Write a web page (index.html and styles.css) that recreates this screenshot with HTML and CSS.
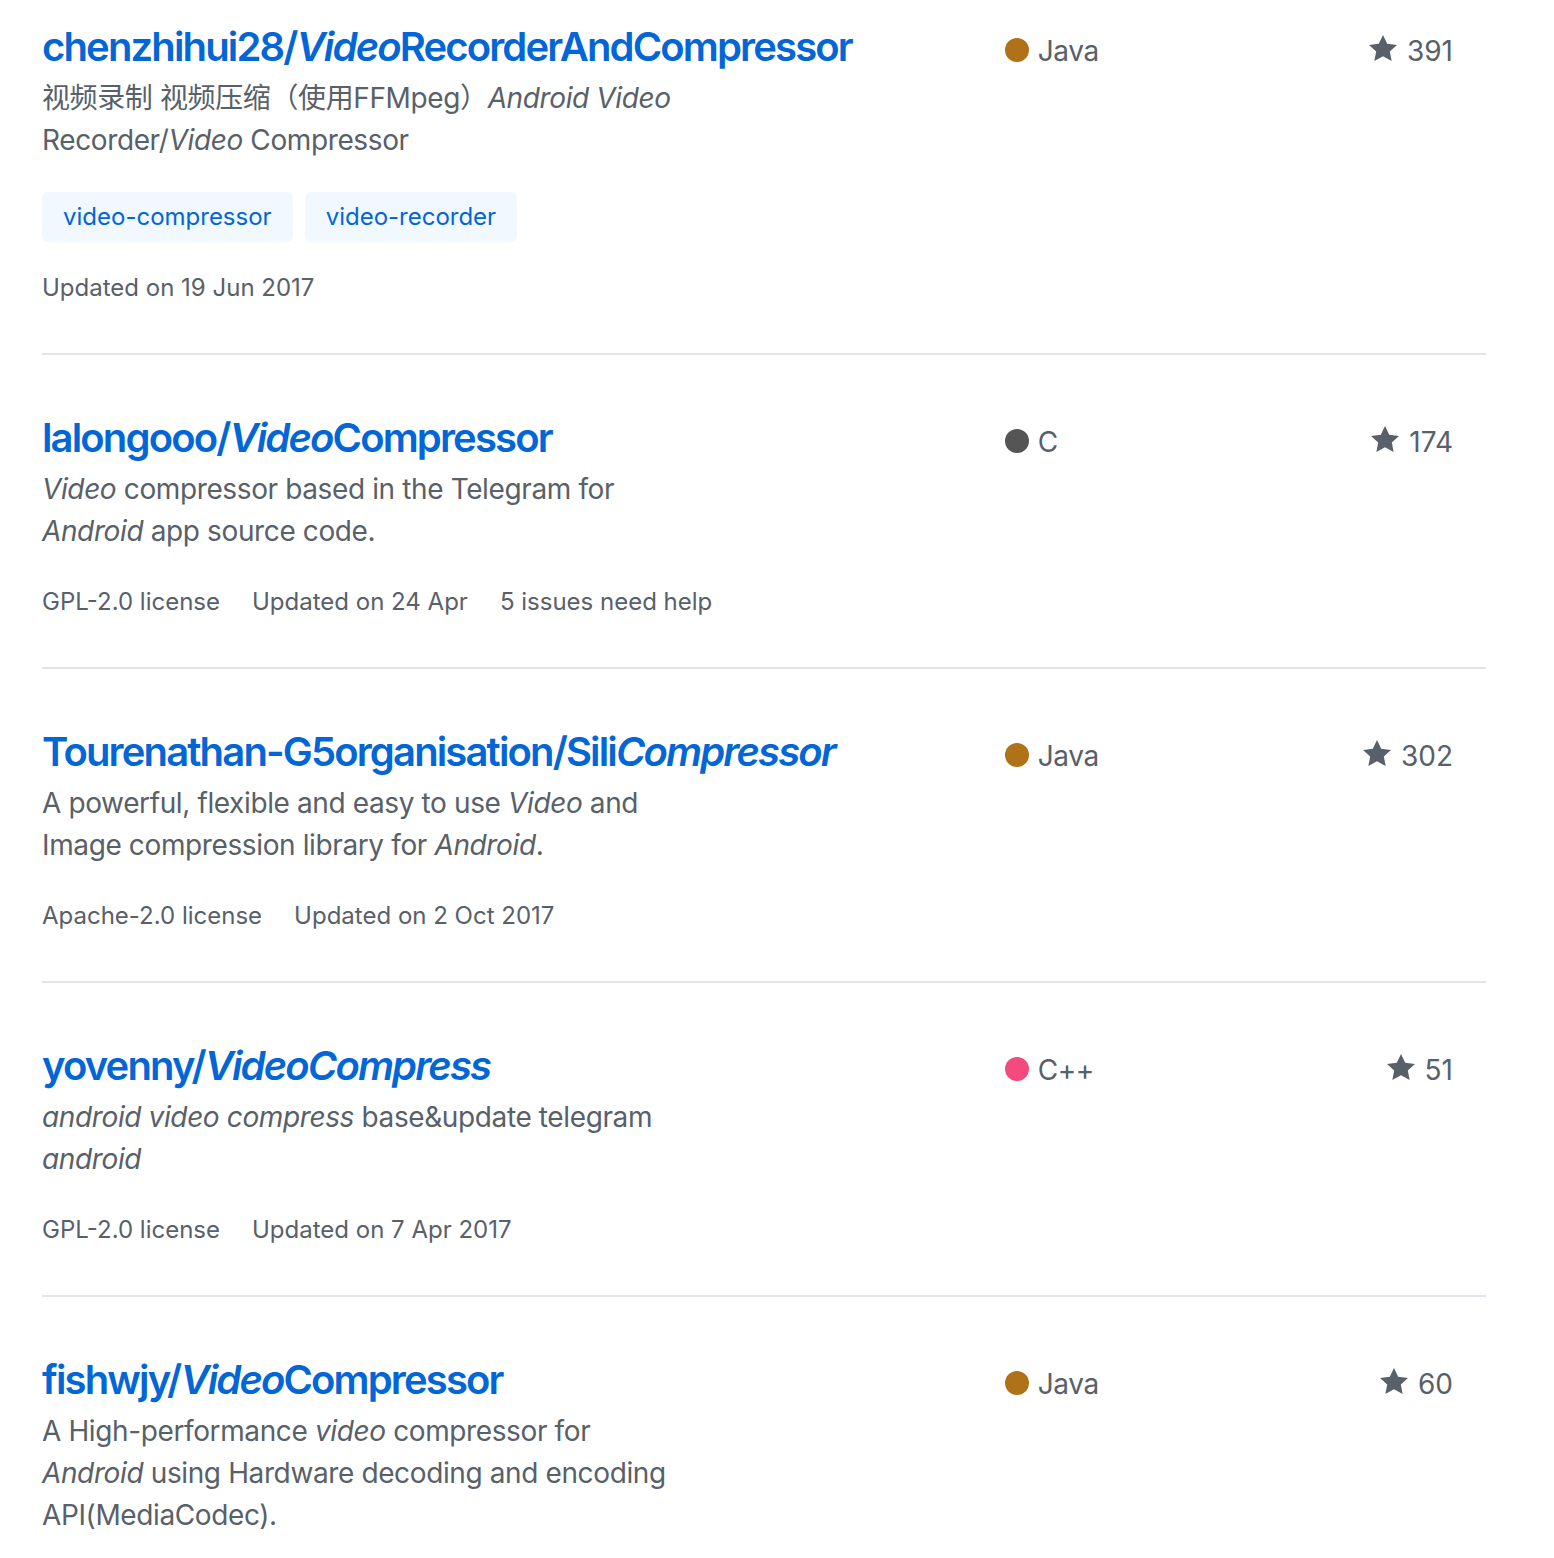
FILE: index.html
```html
<!DOCTYPE html>
<html lang="en">
<head>
<meta charset="utf-8">
<title>Search results</title>
<link rel="stylesheet" href="styles.css">
</head>
<body>
<div class="repo-list">

  <div class="repo-item">
    <div class="repo-main">
      <h3 class="repo-title"><a href="#">chenzhihui28/<em>Video</em>RecorderAndCompressor</a></h3>
      <p class="repo-desc">视频录制 视频压缩（使用FFMpeg）<em>Android Video</em> Recorder/<em>Video</em> Compressor</p>
      <div class="topics">
        <a class="topic-tag" href="#">video-compressor</a>
        <a class="topic-tag" href="#">video-recorder</a>
      </div>
      <div class="meta">
        <span>Updated on 19 Jun 2017</span>
      </div>
    </div>
    <div class="repo-lang"><span class="lang-dot java"></span>Java</div>
    <div class="repo-stars"><svg class="star" viewBox="0 0 14 16" width="28" height="32"><path d="M14 6l-4.9-.64L7 1 4.9 5.36 0 6l3.6 3.26L2.67 14 7 11.67 11.33 14l-.93-4.74L14 6z"/></svg>391</div>
  </div>

  <div class="repo-item">
    <div class="repo-main">
      <h3 class="repo-title"><a href="#">lalongooo/<em>Video</em>Compressor</a></h3>
      <p class="repo-desc"><em>Video</em> compressor based in the Telegram for <em>Android</em> app source code.</p>
      <div class="meta">
        <span>GPL-2.0 license</span>
        <span>Updated on 24 Apr</span>
        <span>5 issues need help</span>
      </div>
    </div>
    <div class="repo-lang"><span class="lang-dot c"></span>C</div>
    <div class="repo-stars"><svg class="star" viewBox="0 0 14 16" width="28" height="32"><path d="M14 6l-4.9-.64L7 1 4.9 5.36 0 6l3.6 3.26L2.67 14 7 11.67 11.33 14l-.93-4.74L14 6z"/></svg>174</div>
  </div>

  <div class="repo-item">
    <div class="repo-main">
      <h3 class="repo-title"><a href="#">Tourenathan-G5organisation/Sili<em>Compressor</em></a></h3>
      <p class="repo-desc">A powerful, flexible and easy to use <em>Video</em> and Image compression library for <em>Android</em>.</p>
      <div class="meta">
        <span>Apache-2.0 license</span>
        <span>Updated on 2 Oct 2017</span>
      </div>
    </div>
    <div class="repo-lang"><span class="lang-dot java"></span>Java</div>
    <div class="repo-stars"><svg class="star" viewBox="0 0 14 16" width="28" height="32"><path d="M14 6l-4.9-.64L7 1 4.9 5.36 0 6l3.6 3.26L2.67 14 7 11.67 11.33 14l-.93-4.74L14 6z"/></svg>302</div>
  </div>

  <div class="repo-item">
    <div class="repo-main">
      <h3 class="repo-title"><a href="#">yovenny/<em>VideoCompress</em></a></h3>
      <p class="repo-desc"><em>android video compress</em> base&amp;update telegram <em>android</em></p>
      <div class="meta">
        <span>GPL-2.0 license</span>
        <span>Updated on 7 Apr 2017</span>
      </div>
    </div>
    <div class="repo-lang"><span class="lang-dot cpp"></span>C++</div>
    <div class="repo-stars"><svg class="star" viewBox="0 0 14 16" width="28" height="32"><path d="M14 6l-4.9-.64L7 1 4.9 5.36 0 6l3.6 3.26L2.67 14 7 11.67 11.33 14l-.93-4.74L14 6z"/></svg>51</div>
  </div>

  <div class="repo-item">
    <div class="repo-main">
      <h3 class="repo-title"><a href="#">fishwjy/<em>Video</em>Compressor</a></h3>
      <p class="repo-desc">A High-performance <em>video</em> compressor for <em>Android</em> using Hardware decoding and encoding API(MediaCodec).</p>
    </div>
    <div class="repo-lang"><span class="lang-dot java"></span>Java</div>
    <div class="repo-stars"><svg class="star" viewBox="0 0 14 16" width="28" height="32"><path d="M14 6l-4.9-.64L7 1 4.9 5.36 0 6l3.6 3.26L2.67 14 7 11.67 11.33 14l-.93-4.74L14 6z"/></svg>60</div>
  </div>

</div>
</body>
</html>
```

FILE: styles.css
```css
html, body {
  margin: 0;
  padding: 0;
  background: #ffffff;
}

body {
  font-family: Inter, "Noto Sans", "Noto Sans CJK SC", sans-serif;
  color: #586069;
  overflow: hidden;
}

.repo-list {
  width: 1444px;
  margin: -36px 0 0 42px;
}

.repo-item {
  display: grid;
  grid-template-columns: 8fr 2fr 2fr;
  padding: 48px 0 47px;
  border-bottom: 2px solid #e1e4e8;
}

.repo-main {
  min-width: 0;
}

.repo-title {
  margin: 0;
  padding-top: 10px;
  margin-bottom: 5px;
  font-size: 40px;
  line-height: 50px;
  font-weight: 600;
  letter-spacing: -1.85px;
}

.repo-title a {
  color: #0366d6;
  text-decoration: none;
}

.repo-title em,
.repo-desc em {
  font-style: italic;
}

.repo-desc {
  margin: 0;
  width: 650px;
  padding-right: 48px;
  font-size: 28px;
  line-height: 42px;
  letter-spacing: -0.38px;
  color: #586069;
}

.topics {
  display: flex;
  flex-wrap: wrap;
  gap: 12px;
  margin-top: 31px;
}

.topic-tag {
  display: inline-block;
  height: 50px;
  line-height: 50px;
  padding: 0 21px;
  font-size: 24px;
  color: #0366d6;
  background: #f1f8ff;
  border-radius: 6px;
  text-decoration: none;
}

.meta {
  display: flex;
  gap: 32px;
  margin-top: 32px;
  font-size: 24px;
  line-height: 36px;
  color: #586069;
}

.topics + .meta {
  margin-top: 28px;
}

.repo-lang {
  display: flex;
  align-items: flex-start;
  padding-top: 18px;
  font-size: 28px;
  line-height: 42px;
  letter-spacing: -0.38px;
  color: #586069;
}

.lang-dot {
  flex: none;
  width: 24px;
  height: 24px;
  border-radius: 50%;
  margin: 8px 9px 0 0;
}

.lang-dot.java { background: #b07219; }
.lang-dot.c { background: #555555; }
.lang-dot.cpp { background: #f34b7d; }

.repo-stars {
  display: flex;
  justify-content: flex-end;
  align-items: flex-start;
  padding-top: 18px;
  padding-right: 33px;
  font-size: 28px;
  line-height: 42px;
  color: #586069;
}

.star {
  flex: none;
  fill: #586069;
  margin: 3px 10px 0 0;
}
```
